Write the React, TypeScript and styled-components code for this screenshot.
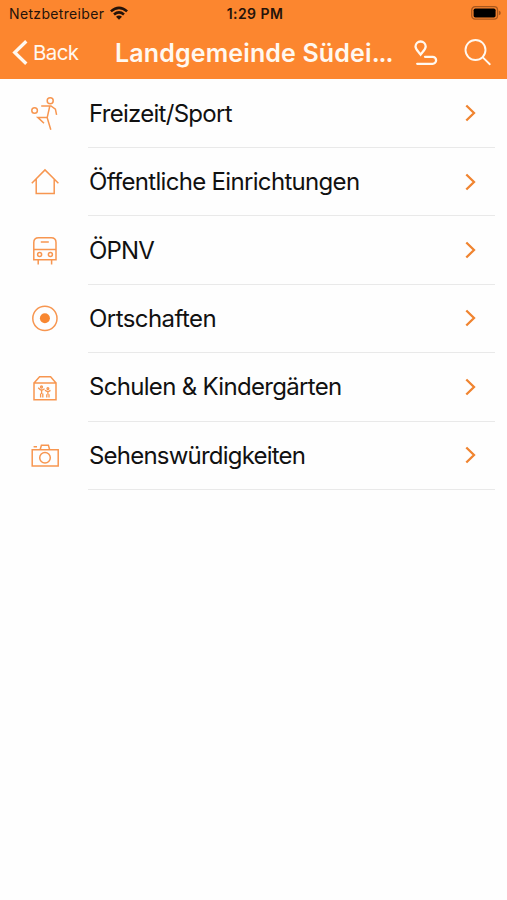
import React from "react";
import styled, { createGlobalStyle } from "styled-components";

const ORANGE = "#fc862f";

const GlobalStyle = createGlobalStyle`
  *, *::before, *::after { box-sizing: border-box; }
  body {
    margin: 0;
    background: #fefefe;
    font-family: Inter, "Liberation Sans", sans-serif;
  }
`;

const Screen = styled.div`
  height: 900px;
  overflow: hidden;
  background: #fefefe;
`;

const Header = styled.header`
  height: 79px;
  background: ${ORANGE};
`;

const StatusBar = styled.div`
  display: grid;
  grid-template-columns: 1fr auto 1fr;
  align-items: center;
  height: 27px;
  padding: 0 6px 0 9px;
  color: #24130a;
  font-size: 14px;
  line-height: 27px;
`;

const Carrier = styled.div`
  display: flex;
  align-items: center;
  gap: 6px;
  letter-spacing: 0.34px;
`;

const Clock = styled.div`
  font-weight: 600;
  letter-spacing: 0.45px;
`;

const Battery = styled.div`
  display: flex;
  justify-content: flex-end;
  padding-bottom: 1px;
`;

const NavBar = styled.nav`
  display: flex;
  align-items: center;
  height: 51px;
  padding: 0 14px 0 11px;
  color: #fff8f0;
`;

const BackButton = styled.button`
  display: flex;
  align-items: center;
  gap: 4px;
  width: 104px;
  padding: 0;
  border: 0;
  background: none;
  color: inherit;
  font: 400 20.5px/28px Inter, "Liberation Sans", sans-serif;
  letter-spacing: -0.6px;
`;

const Title = styled.h1`
  width: 298px;
  margin: 0;
  font-size: 25px;
  font-weight: 600;
  line-height: 32px;
  letter-spacing: 0.14px;
  white-space: nowrap;
`;

const Ellipsis = styled.span`
  letter-spacing: -1px;
`;

const Actions = styled.div`
  display: flex;
  align-items: center;
  gap: 26px;
`;

const List = styled.ul`
  margin: 0;
  padding: 0.6px 0 0;
  list-style: none;
`;

const Row = styled.li`
  display: flex;
  height: 68.4px;
  padding: 0 12px 0 27px;
`;

const IconSlot = styled.div`
  display: flex;
  align-items: center;
  width: 61px;
`;

const RowBody = styled.div`
  display: flex;
  flex: 1;
  align-items: center;
  justify-content: space-between;
  padding-right: 18px;
  border-bottom: 1px solid #e9e9e9;
`;

const Label = styled.span<{ $tracking: number }>`
  padding-left: 1px;
  color: #111;
  font-size: 24px;
  letter-spacing: ${(p) => p.$tracking}px;
  white-space: nowrap;
`;

const LineIcon = styled.svg`
  display: block;
  width: 36px;
  height: 36px;
  fill: none;
  stroke: #f79650;
  stroke-width: 1.5;
`;

const Glyph = styled.svg`
  display: block;
  flex: none;
  fill: none;
  stroke: currentColor;
  overflow: visible;
`;

const SportIcon = () => (
  <LineIcon viewBox="7 11 36 36">
    <circle cx="14.6" cy="25.5" r="2.8" />
    <circle cx="30.2" cy="15.8" r="3" />
    <path d="M21.2 21H31l4.4 3.2 1.2 5.6M29.8 21l-2.6 11.6 3.6 12.2M27.2 32.4h-9.4l6.2 5.8" />
  </LineIcon>
);

const HouseIcon = () => (
  <LineIcon viewBox="7 9 36 36">
    <path d="M11.8 28.2 25 14.9l13.4 13.3M16.2 24v14.6h18V24" />
  </LineIcon>
);

const BusIcon = () => (
  <LineIcon viewBox="7 10.8 36 36">
    <path d="M13.8 37.6V20.4q0-4.8 4.8-4.8h12.6q4.8 0 4.8 4.8v17.2zM13.8 27.4H36M20.8 19.8h8M18.2 37.6v4.6M31.6 37.6v4.6" />
    <circle cx="19.6" cy="32.2" r="2" />
    <circle cx="30.4" cy="32.2" r="2" />
  </LineIcon>
);

const TargetIcon = () => (
  <LineIcon viewBox="7 11.2 36 36">
    <circle cx="24.9" cy="28.6" r="12.1" />
    <circle cx="24.9" cy="28.5" r="5" fill="#f88731" stroke="none" />
  </LineIcon>
);

const SchoolIcon = () => (
  <LineIcon viewBox="7 11.4 36 36">
    <path d="M14 25.4h22v16.8H14zM14 25.4l5.6-6.2h11l5.4 6.2" />
    <g strokeWidth="1.3">
      <circle cx="21.5" cy="29.4" r="1" />
      <circle cx="27.9" cy="31" r="0.9" />
      <path d="M18.2 30.2l2.2 2h2.4l1.8-1M21.6 32v4.4M20.6 35.8v4.2M22.8 35.8v4.2M24.9 32.6l2 1.2h2l1.6-1M27.9 34v3M26.8 36.6v3.4M29 36.6v3.4" />
    </g>
  </LineIcon>
);

const CameraIcon = () => (
  <LineIcon viewBox="7 11.7 36 36">
    <path d="M12.2 23.4h26v16.4h-26zM20.2 23.2l1.2-4.2h7l1.2 4.2M13.6 20.4h3.4" />
    <circle cx="25" cy="31.4" r="5.3" />
  </LineIcon>
);

const rows = [
  { label: "Freizeit/Sport", tracking: -0.72, Icon: SportIcon },
  { label: "Öffentliche Einrichtungen", tracking: -0.68, Icon: HouseIcon },
  { label: "ÖPNV", tracking: -0.8, Icon: BusIcon },
  { label: "Ortschaften", tracking: -0.56, Icon: TargetIcon },
  { label: "Schulen & Kindergärten", tracking: -0.69, Icon: SchoolIcon },
  { label: "Sehenswürdigkeiten", tracking: -0.79, Icon: CameraIcon },
];

export default function App() {
  return (
    <Screen>
      <GlobalStyle />
      <Header>
        <StatusBar>
          <Carrier>
            Netzbetreiber
            <Glyph width="18" height="14" viewBox="0 0 18 14" strokeWidth="2.6">
              <path d="M.9 4.4Q9-2.8 17.1 4.4M4 7.5q5-4.2 10 0" />
              <path d="M6 9.7q3-2.2 6 0L9 12.8z" fill="currentColor" stroke="none" />
            </Glyph>
          </Carrier>
          <Clock>1:29 PM</Clock>
          <Battery>
            <Glyph width="30" height="14" viewBox="0 0 30 14">
              <rect x="0.7" y="0.7" width="25.8" height="12.4" rx="3.4" stroke="#a9571d" strokeWidth="1.3" />
              <rect x="2.6" y="2.5" width="22" height="8.9" rx="1.7" fill="#000" stroke="none" />
              <path d="M27.8 4.6q2 .7 2 2.3t-2 2.3z" fill="#a9571d" stroke="none" />
            </Glyph>
          </Battery>
        </StatusBar>
        <NavBar>
          <BackButton>
            <Glyph width="18" height="26" viewBox="0 0 18 26" strokeWidth="3.3">
              <path d="M15.3 1.2 3.7 12.5l11.6 11.3" />
            </Glyph>
            Back
          </BackButton>
          <Title>
            Landgemeinde Südei<Ellipsis>...</Ellipsis>
          </Title>
          <Actions>
            <Glyph width="25" height="26" viewBox="0 0 25 26" strokeWidth="2.3" strokeLinecap="round">
              <path d="M7.6 14.6C5 11.2 2.5 9.4 2.5 6.6a5.1 5.1 0 0 1 10.2 0c0 2.8-2.5 4.6-5.1 8z" />
              <path d="M12 16.8h7.6a3.5 3.5 0 0 1 0 7H4.2" />
            </Glyph>
            <Glyph width="28" height="28" viewBox="0 0 28 28" strokeWidth="1.9" strokeLinecap="round">
              <circle cx="11.5" cy="11" r="10" />
              <path d="M18.8 18.4l7 6.8" />
            </Glyph>
          </Actions>
        </NavBar>
      </Header>
      <List>
        {rows.map(({ label, tracking, Icon }) => (
          <Row key={label}>
            <IconSlot>
              <Icon />
            </IconSlot>
            <RowBody>
              <Label $tracking={tracking}>{label}</Label>
              <Glyph width="12" height="18" viewBox="0 0 12 18" strokeWidth="2.3" color="#f08430">
                <path d="M1.3 1.5 9 9l-7.7 7.5" />
              </Glyph>
            </RowBody>
          </Row>
        ))}
      </List>
    </Screen>
  );
}
